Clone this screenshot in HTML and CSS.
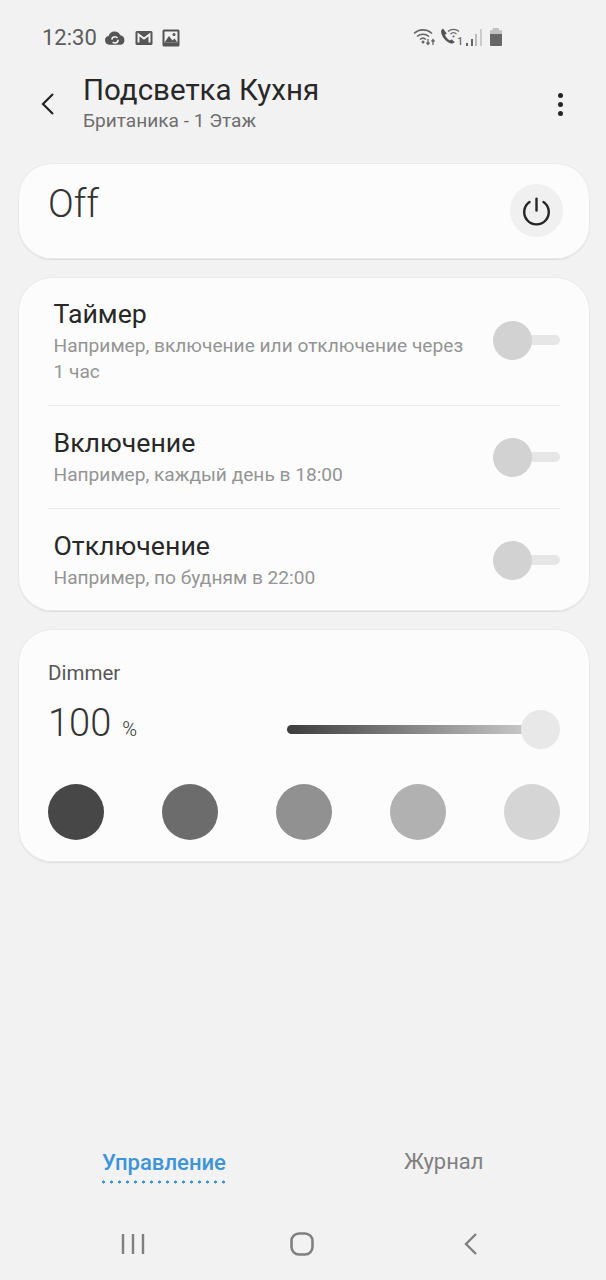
FILE: index.html
```html
<!DOCTYPE html>
<html lang="ru">
<head>
<meta charset="utf-8">
<title>Подсветка Кухня</title>
<link rel="stylesheet" href="styles.css">
</head>
<body>
<div class="screen">
  <div class="status">
    <div class="status-left">
      <span class="time">12:30</span>
      <svg class="si" width="22" height="17" viewBox="0 0 21 16"><path fill="#555" d="M5 14a4.300 4.300 0 0 1-.6-8.500A6 6 0 0 1 15.600 5 4.600 4.600 0 0 1 16 14z"/><circle cx="10.500" cy="9.300" r="3" fill="none" stroke="#f2f2f2" stroke-width="1.500" stroke-dasharray="7 2.400"/></svg>
      <svg class="si" width="18" height="16" viewBox="0 0 18 16"><rect x=".5" y="1" width="17" height="14" rx="1.500" fill="#555"/><path d="M3.500 12.500V4.500L9 8.500l5.500-4v8" fill="none" stroke="#f2f2f2" stroke-width="2"/></svg>
      <svg class="si" width="18" height="18" viewBox="0 0 18 18"><rect x=".5" y=".5" width="17" height="17" rx="1.500" fill="#555"/><rect x="2.500" y="2.500" width="13" height="11" fill="#f2f2f2"/><circle cx="12" cy="5.500" r="1.500" fill="#555"/><path d="M2.500 13.500L7 7l3.500 4.500 2-2 3 4z" fill="#555"/></svg>
    </div>
    <div class="status-right">
      <svg class="wifi" width="24" height="20" viewBox="0 0 24 20"><g fill="none" stroke="#666" stroke-width="1.600"><path d="M1 6.500a13 13 0 0 1 18 0"/><path d="M4 9.500a9 9 0 0 1 12 0"/><path d="M7 12.500a4.500 4.500 0 0 1 6 0"/></g><circle cx="10" cy="15" r="1.500" fill="#666"/><path d="M15 12v5M13.500 15.500l1.500 2 1.500-2M20 18v-5M18.500 14.500l1.500-2 1.500 2" fill="none" stroke="#666" stroke-width="1.300"/></svg>
      <svg width="20" height="20" viewBox="0 0 20 20"><path fill="#555" d="M3 1.500c-1.500.8-2.300 2.200-1.800 4.200 1 4.500 4.500 8.500 9 10.500 1.800.7 3.500.2 4.500-1.200l-3.300-2.700-1.700 1.200c-2.200-1.300-3.800-3.300-4.700-5.700l1.800-1.300z"/><g fill="none" stroke="#666" stroke-width="1.200"><path d="M8 4.500a8 8 0 0 1 11 0"/><path d="M10.500 7a4.500 4.500 0 0 1 6 0"/></g><circle cx="13.500" cy="9.500" r="1.100" fill="#666"/></svg>
      <span class="sim">1</span>
      <span class="bars"><i class="b1"></i><i class="b2"></i><i class="b3"></i><i class="b4"></i></span>
      <span class="battery"></span>
    </div>
  </div>

  <header class="appbar">
    <svg class="back" width="16" height="24" viewBox="0 0 16 24"><path d="M13 2 3 12l10 10" fill="none" stroke="#252525" stroke-width="2.200"/></svg>
    <div class="titles">
      <div class="title">Подсветка Кухня</div>
      <div class="subtitle">Британика - 1 Этаж</div>
    </div>
    <div class="more"><i></i><i></i><i></i></div>
  </header>

  <main class="cards">
    <section class="card power">
      <span class="off">Off</span>
      <span class="power-btn">
        <svg width="30" height="30" viewBox="0 0 30 30"><path d="M7.500 6A12.300 12.300 0 1 0 21.500 6" fill="none" stroke="#252525" stroke-width="2.400" stroke-linecap="round"/><path d="M14.500 2.700v11.800" stroke="#252525" stroke-width="2.400" stroke-linecap="round"/></svg>
      </span>
    </section>

    <section class="card schedule">
      <div class="row row-a">
        <div class="row-text">
          <div class="row-title">Таймер</div>
          <div class="row-sub">Например, включение или отключение через 1 час</div>
        </div>
        <span class="switch"></span>
      </div>
      <div class="row row-b">
        <div class="row-text">
          <div class="row-title">Включение</div>
          <div class="row-sub">Например, каждый день в 18:00</div>
        </div>
        <span class="switch"></span>
      </div>
      <div class="row row-b">
        <div class="row-text">
          <div class="row-title">Отключение</div>
          <div class="row-sub">Например, по будням в 22:00</div>
        </div>
        <span class="switch"></span>
      </div>
    </section>

    <section class="card dimmer">
      <div class="dim-label">Dimmer</div>
      <div class="dim-value">
        <div class="dim-num"><span class="num">100</span><span class="pct">%</span></div>
        <div class="slider"><span class="thumb"></span></div>
      </div>
      <div class="swatches">
        <span class="swatch s1"></span>
        <span class="swatch s2"></span>
        <span class="swatch s3"></span>
        <span class="swatch s4"></span>
        <span class="swatch s5"></span>
      </div>
    </section>
  </main>

  <nav class="tabs">
    <span class="tab active">Управление</span>
    <span class="tab">Журнал</span>
  </nav>

  <div class="navbar">
    <svg width="24" height="22" viewBox="0 0 24 22"><path d="M2 1v20M12 1v20M22 1v20" stroke="#808080" stroke-width="2.400"/></svg>
    <svg width="24" height="24" viewBox="0 0 24 24"><rect x="1.500" y="1.500" width="21" height="21" rx="7.500" fill="none" stroke="#808080" stroke-width="2.600"/></svg>
    <svg class="nav-back" width="16" height="24" viewBox="0 0 16 24"><path d="M13 2 3 12l10 10" fill="none" stroke="#808080" stroke-width="2.400"/></svg>
  </div>
</div>
</body>
</html>
```
FILE: styles.css
```css
* { box-sizing: border-box; }
html, body { margin: 0; padding: 0; }
body { background: #f2f2f2; font-family: Roboto, "Noto Sans", sans-serif; color: #252525; }
.screen { width: 606px; height: 1280px; display: flex; flex-direction: column; overflow: hidden; }

.status { height: 60px; padding: 26px 104px 0 42px; display: flex; justify-content: space-between; align-items: flex-start; flex: none; }
.status-left { display: flex; align-items: center; gap: 9px; height: 24px; }
.time { font-size: 22px; color: #5c5c5c; margin-right: -2px; line-height: 24px; }
.si { display: block; }
.status-right { display: flex; align-items: center; height: 24px; margin-top: -1px; }
.wifi { margin-right: 3px; }
.sim { font-size: 10px; font-weight: 500; color: #666; align-self: flex-end; margin: 0 0 2px -3px; }
.bars { display: flex; align-items: flex-end; gap: 2.670px; height: 17px; margin-left: 3px; margin-right: 7.500px; }
.bars i { width: 2px; display: block; }
.b1 { height: 3px; background: #666; }
.b2 { height: 7px; background: #666; }
.b3 { height: 12px; background: #bbb; }
.b4 { height: 17px; background: #ccc; }
.battery { width: 12.500px; height: 18px; background: linear-gradient(#c2c2c2 0 36%, #666 36%); border-radius: 1px; clip-path: polygon(25% 0, 75% 0, 75% 12%, 100% 12%, 100% 100%, 0 100%, 0 12%, 25% 12%); }

.appbar { height: 88px; padding: 0 43px 0 40px; display: flex; align-items: flex-start; flex: none; }
.back { margin-top: 32px; flex: none; }
.titles { margin-left: 27px; flex: 1; padding-top: 12px; }
.title { font-size: 29.500px; line-height: 37px; color: #282828; }
.subtitle { font-size: 19.100px; line-height: 24px; color: #6e6e6e; }
.more { display: flex; flex-direction: column; gap: 4px; margin-top: 33px; }
.more i { width: 5px; height: 5px; border-radius: 50%; background: #252525; display: block; }

.cards { display: flex; flex-direction: column; gap: 18px; padding: 15px 16px 0 18px; flex: 1; }
.card { background: #fcfcfc; border-radius: 34px; box-shadow: inset 0 0 0 1px #e9e9e9, 0 1px 1px #dcdcdc; }

.power { height: 96px; padding: 0 27px 0 30px; display: flex; justify-content: space-between; align-items: flex-start; }
.off { font-size: 38px; font-weight: 300; line-height: 44px; margin-top: 19px; color: #333; }
.power-btn { width: 53px; height: 53px; margin-top: 21px; border-radius: 50%; background: #f0f0f0; display: flex; align-items: center; justify-content: center; }

.schedule { height: 334px; padding: 0 30px; }
.row { display: flex; justify-content: space-between; align-items: flex-start; border-top: 1px solid #ebebeb; padding: 0 0 0 5.500px; }
.row-a { height: 128px; border-top: 0; padding-top: 20px; }
.row-b { height: 103px; padding-top: 20px; }
.row-text { width: 414px; }
.row-title { font-size: 26.700px; line-height: 34px; color: #282828; }
.row-sub { font-size: 19.150px; line-height: 26px; color: #949494; margin-top: 2px; }
.switch { position: relative; display: block; width: 67px; height: 10px; margin-top: 38px; background: #e6e6e6; border-radius: 5px; }
.row-b .switch { margin-top: 26px; }
.switch::before { content: ""; position: absolute; left: 0; top: -14.500px; width: 39px; height: 39px; border-radius: 50%; background: #d2d2d2; }

.dimmer { height: 233px; padding: 30px 30px 0; }
.dim-label { font-size: 20.500px; line-height: 28px; color: #575757; }
.dim-value { display: flex; justify-content: space-between; align-items: center; margin-top: 19px; height: 46px; }
.dim-num { display: flex; align-items: baseline; color: #333; margin-bottom: 12px; }
.num { font-size: 38px; font-weight: 300; }
.pct { font-size: 20px; margin-left: 11px; font-weight: 300; }
.slider { position: relative; width: 273px; height: 9px; margin-top: 1px; border-radius: 5px; background: linear-gradient(90deg, #3c3c3c, #dcdcdc); }
.thumb { position: absolute; right: 0; top: -15px; width: 39px; height: 39px; border-radius: 50%; background: #e8e8e8; }
.swatches { display: flex; justify-content: space-between; margin-top: 32px; }
.swatch { width: 56px; height: 56px; border-radius: 50%; display: block; }
.s1 { background: #474747; }
.s2 { background: #6c6c6c; }
.s3 { background: #919191; }
.s4 { background: #b1b1b1; }
.s5 { background: #d5d5d5; }

.tabs { height: 70px; padding: 11px 0 0 102px; display: flex; gap: 178px; align-items: flex-start; flex: none; }
.tab { font-size: 21.900px; line-height: 30px; color: #808080; padding-bottom: 7px; }
.tab.active { font-size: 22.100px; color: #3d94d6; font-weight: 500; background: radial-gradient(circle at 1.500px 2px, #3d94d6 1.300px, transparent 1.800px) left bottom / 8px 4px repeat-x; }

.navbar { height: 74px; padding: 1px 0 0 121px; display: flex; gap: 145px; align-items: center; flex: none; }
.nav-back { margin-left: 4px; }
```
